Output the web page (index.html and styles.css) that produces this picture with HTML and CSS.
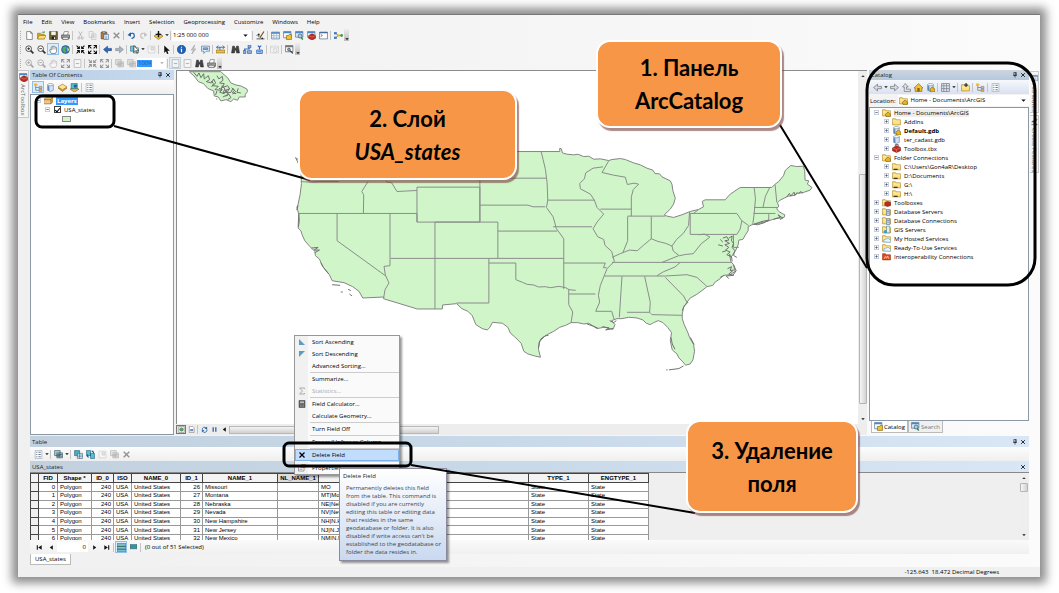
FILE: index.html
```html
<!DOCTYPE html>
<html lang="ru">
<head>
<meta charset="utf-8">
<title>ArcMap</title>
<link rel="stylesheet" href="styles.css">
</head>
<body>
<svg class="defs" aria-hidden="true">
  <symbol id="new" viewBox="0 0 16 16"><path d="M3 1h7l3 3v11H3z" fill="#fff" stroke="#444"/><path d="M10 1v3h3" fill="none" stroke="#444"/></symbol>
  <symbol id="open" viewBox="0 0 16 16"><path d="M1 14V4h5l1 2h6v8z" fill="#d9a520" stroke="#8a6a10"/><path d="M1 14l3-6h12l-3 6z" fill="#ffe27a" stroke="#8a6a10"/><path d="M8 3q3-3 5 0m0 0V0m0 3h-3" stroke="#2a8a3a" fill="none"/></symbol>
  <symbol id="save" viewBox="0 0 16 16"><path d="M1 1h14v14H1z" fill="#6b6435" stroke="#333"/><path d="M4 1h8v6H4z" fill="#f4f4e8"/><path d="M5 10h7v5H5z" fill="#222"/><path d="M9 11h2v3H9z" fill="#fff"/></symbol>
  <symbol id="print" viewBox="0 0 16 16"><path d="M4 7l2-6h7l-1 6" fill="#fff" stroke="#555"/><path d="M1 7h14v6H1z" fill="#9aa0a8" stroke="#333"/><path d="M3 11h10v4H3z" fill="#eee" stroke="#333"/><path d="M11 9h3" stroke="#e8c020"/></symbol>
  <symbol id="cut" viewBox="0 0 16 16"><path d="M5 1l5 9M11 1L6 10" stroke="#555" stroke-width="1.5"/><circle cx="5" cy="12.500" r="2" fill="none" stroke="#555" stroke-width="1.500"/><circle cx="11" cy="12.500" r="2" fill="none" stroke="#555" stroke-width="1.500"/></symbol>
  <symbol id="copy" viewBox="0 0 16 16"><path d="M2 1h7v10H2zM6 5h8v10H6z" fill="#fff" stroke="#555"/><path d="M8 8h4M8 10h4M8 12h4" stroke="#555"/></symbol>
  <symbol id="paste" viewBox="0 0 16 16"><path d="M2 2h10v12H2z" fill="#b8783a" stroke="#5a3a10"/><path d="M5 0h4v4H5z" fill="#d8d8d8" stroke="#444"/><path d="M7 6h8v9H7z" fill="#fff" stroke="#24508a"/><path d="M9 9h4M9 11h4M9 13h4" stroke="#3c6eb0"/></symbol>
  <symbol id="x" viewBox="0 0 16 16"><path d="M3 3l10 10M13 3L3 13" stroke="currentColor" stroke-width="2.500"/></symbol>
  <symbol id="undo" viewBox="0 0 16 16"><path d="M4 6q9-5 9 3q0 4-5 4" fill="none" stroke="#1e5aa8" stroke-width="2"/><path d="M1 7l6-5v8z" fill="#1e5aa8"/></symbol>
  <symbol id="redo" viewBox="0 0 16 16"><path d="M12 6q-9-5-9 3q0 4 5 4" fill="none" stroke="#777" stroke-width="2"/><path d="M15 7L9 2v8z" fill="#777"/></symbol>
  <symbol id="add" viewBox="0 0 16 16"><path d="M0 9l8-5 8 5-8 6z" fill="#f0c040" stroke="#7a5a10"/><path d="M8 0v11M3 6h10" stroke="#111" stroke-width="2.500"/></symbol>
  <symbol id="edit" viewBox="0 0 16 16"><path d="M1 8l4-2v5M1 14h14" stroke="#444" fill="none" stroke-width="1.500"/><path d="M14 1L7 12" stroke="#6b4a20" stroke-width="2"/><circle cx="5" cy="6" r="1.500" fill="#222"/><circle cx="11" cy="13" r="1.500" fill="#222"/></symbol>
  <symbol id="win" viewBox="0 0 16 16"><path d="M1 2h14v12H1z" fill="#fff" stroke="#2d5686"/><path d="M1 2h14v3H1z" fill="#4f86c6"/><path d="M5 5v9M10 5v9M1 8h14M1 11h14" stroke="#86a6cc"/></symbol>
  <symbol id="cat" viewBox="0 0 16 16"><path d="M1 1h13v11H1z" fill="#fff" stroke="#2d5686"/><path d="M1 1h13v3H1z" fill="#4f86c6"/><path d="M6 8h4l1-2h4v9H6z" fill="#f2c230" stroke="#6a5208"/></symbol>
  <symbol id="srch" viewBox="0 0 16 16"><path d="M1 1h13v10H1z" fill="#dcebf8" stroke="#2d5686"/><path d="M1 1h13v3H1z" fill="#4f86c6"/><circle cx="9" cy="9" r="3.500" fill="#9fd3f2" stroke="#333"/><path d="M11 12l3 3" stroke="#248a3e" stroke-width="2.500"/></symbol>
  <symbol id="tbx" viewBox="0 0 16 16"><path d="M1 7l7-4 7 3v6l-7 3-7-3z" fill="#c02a20" stroke="#7a1008"/><path d="M1 7l7 3 7-4M8 10v5" stroke="#f08a80" fill="none"/><path d="M6 4V1h5v3" fill="none" stroke="#555" stroke-width="1.500"/></symbol>
  <symbol id="tbxwin" viewBox="0 0 16 16"><path d="M1 1h13v10H1z" fill="#fff" stroke="#2d5686"/><path d="M1 1h13v3H1z" fill="#4f86c6"/><path d="M3 8l6-3 6 3v5l-6 3-6-3z" fill="#c02a20" stroke="#7a1008"/><path d="M3 8l6 3 6-3" stroke="#f08a80" fill="none"/></symbol>
  <symbol id="py" viewBox="0 0 16 16"><path d="M1 2h14v12H1z" fill="#fff" stroke="#2d4666"/><path d="M1 2h14v2H1z" fill="#385f92"/><path d="M3 6l3 2-3 2" stroke="#222" fill="none"/></symbol>
  <symbol id="model" viewBox="0 0 16 16"><path d="M3 4l5 4-5 4M8 8h5" stroke="#444" fill="none"/><path d="M0 2h5v4H0z" fill="#3f79c4"/><path d="M0 10h5v4H0z" fill="#3f79c4"/><path d="M5 6h5v4H5z" fill="#e8b820"/><circle cx="13.500" cy="8" r="2.500" fill="#3aa248"/></symbol>
  <symbol id="zin" viewBox="0 0 16 16"><circle cx="6.500" cy="6.500" r="5" fill="#fff" stroke="#333" stroke-width="1.500"/><path d="M10 10l5 5" stroke="#333" stroke-width="3"/><path d="M4 6.500h5M6.500 4v5" stroke="#222" stroke-width="1.500"/></symbol>
  <symbol id="zout" viewBox="0 0 16 16"><circle cx="6.500" cy="6.500" r="5" fill="#fff" stroke="#333" stroke-width="1.500"/><path d="M10 10l5 5" stroke="#333" stroke-width="3"/><path d="M4 6.500h5" stroke="#222" stroke-width="1.500"/></symbol>
  <symbol id="hand" viewBox="0 0 16 16"><path d="M4 15L1 9q0-2 3 0V4q1-2 2 0V3q1-3 2.500 0 1-2 2.500 1 2-1 2.500 1v6l-2 4z" fill="#fff" stroke="#444"/><path d="M6 4v4M8.500 3v5M11 4v4" stroke="#777"/></symbol>
  <symbol id="globe" viewBox="0 0 16 16"><circle cx="8" cy="8" r="7" fill="#2f78c8" stroke="#174070"/><path d="M3 4l5-2 2 3-3 3 2 3-2 3-4-4z" fill="#58b04a"/><path d="M11 4l4 4-3 4z" fill="#e2d860"/></symbol>
  <symbol id="dview" viewBox="0 0 16 16"><path d="M2 1h12v14H2z" fill="#fff" stroke="#555"/><circle cx="8" cy="8" r="4" fill="#58a86a" stroke="#2a6a3a"/></symbol>
  <symbol id="lview" viewBox="0 0 16 16"><path d="M3 1h8l3 3v11H3z" fill="#fff" stroke="#555"/><path d="M5 7h7v5H5z" fill="#6a90b8"/></symbol>
  <symbol id="fixin" viewBox="0 0 16 16"><path d="M2 6h4V2M14 6h-4V2M2 10h4v4M14 10h-4v4M1 1l4 4M15 1l-4 4M1 15l4-4M15 15l-4-4" fill="none" stroke="#111" stroke-width="1.800"/></symbol>
  <symbol id="fixout" viewBox="0 0 16 16"><path d="M1 6V1h5M15 6V1h-5M1 10v5h5M15 10v5h-5M1 1l5 5M15 1l-5 5M1 15l5-5M15 15l-5-5" fill="none" stroke="#111" stroke-width="1.800"/></symbol>
  <symbol id="left" viewBox="0 0 16 16"><path d="M1 8l7-6v4h7v4H8v4z" fill="#2c68c0" stroke="#16407c"/></symbol>
  <symbol id="right" viewBox="0 0 16 16"><path d="M15 8L8 2v4H1v4h7v4z" fill="#a9b3bf" stroke="#7e8894"/></symbol>
  <symbol id="gleft" viewBox="0 0 16 16"><path d="M1 8l7-6v4h7v4H8v4z" fill="#d8dbe2" stroke="#555"/></symbol>
  <symbol id="gright" viewBox="0 0 16 16"><path d="M15 8L8 2v4H1v4h7v4z" fill="#d8dbe2" stroke="#555"/></symbol>
  <symbol id="up" viewBox="0 0 16 16"><path d="M6 1l5 6H8v4h7v4H4V7H1z" fill="#e4e4e4" stroke="#555"/></symbol>
  <symbol id="sel" viewBox="0 0 16 16"><path d="M1 2h9v9H1z" fill="#6bd0d8" stroke="#24586a"/><path d="M6 5h9v9H6z" fill="#e8f4e8" stroke="#24586a"/><path d="M7 1v12l3-3 2 5 1.500-1-2-4h4z" fill="#fff" stroke="#111"/></symbol>
  <symbol id="clear" viewBox="0 0 16 16"><path d="M2 2h12v12H2z" fill="#fff" stroke="#777"/><path d="M7 4h5v5H7z" fill="#ccc" stroke="#777"/></symbol>
  <symbol id="ptr" viewBox="0 0 16 16"><path d="M4 1v13l3-3 2 5 2.500-1-2-5h4.500z" fill="#111"/></symbol>
  <symbol id="info" viewBox="0 0 16 16"><circle cx="8" cy="8" r="7.500" fill="#1f62b8" stroke="#123a78"/><path d="M8 3v2M8 7v6M6.500 7H8" stroke="#fff" stroke-width="2"/></symbol>
  <symbol id="bolt" viewBox="0 0 16 16"><path d="M10 0L4 9h4l-3 7 7-9H8z" fill="#ccc" stroke="#999"/></symbol>
  <symbol id="pop" viewBox="0 0 16 16"><path d="M1 2h14v9H9l-4 4v-4H1z" fill="#e9f3fb" stroke="#2d5686"/><path d="M4 5h8v3H4z" fill="#8fb4dc" stroke="#2d5686"/></symbol>
  <symbol id="measure" viewBox="0 0 16 16"><path d="M0 9h16v5H0z" fill="#f0c040" stroke="#7a5a10"/><path d="M1 4h14M4 1L1 4l3 3M12 1l3 3-3 3M7 4v5" fill="none" stroke="#1d5da8" stroke-width="1.500"/></symbol>
  <symbol id="find" viewBox="0 0 16 16"><path d="M3 2h3l1 4h2l1-4h3l2 12h-5l-1-5H7l-1 5H1z" fill="#444" stroke="#222"/></symbol>
  <symbol id="route" viewBox="0 0 16 16"><path d="M3 14V7h8V2" fill="none" stroke="#2c68c0" stroke-width="2"/><path d="M9 0h5v5H9zM8 10h7v5H8zM0 10h5v5H0z" fill="#8cb8e8" stroke="#1d4a86"/></symbol>
  <symbol id="xy" viewBox="0 0 16 16"><path d="M5 1l3 3 3-3M8 4v4" stroke="#2c68c0" stroke-width="2" fill="none"/><path d="M3 9h10v6H3zM5 12h6" stroke="#2c68c0" stroke-width="1.500" fill="#bcd6f2"/></symbol>
  <symbol id="time" viewBox="0 0 16 16"><path d="M1 2h14v12H1z" fill="#fff" stroke="#777"/><path d="M1 5h14" stroke="#777"/><circle cx="9" cy="10" r="3.500" fill="#eee" stroke="#777"/></symbol>
  <symbol id="viewer" viewBox="0 0 16 16"><path d="M1 1h13v11H1z" fill="#fff" stroke="#333"/><path d="M1 1h13v3H1z" fill="#777"/><circle cx="7" cy="8" r="2.500" fill="#8ac" stroke="#333"/><path d="M9 10l5 5" stroke="#333" stroke-width="2"/></symbol>
  <symbol id="page" viewBox="0 0 16 16"><path d="M2 1h12v14H2z" fill="#fff" stroke="#666" stroke-width="1.500"/><path d="M5 8h6" stroke="#666" stroke-width="2"/></symbol>
  <symbol id="list" viewBox="0 0 16 16"><path d="M2 1h12v14H2z" fill="#fff" stroke="#8a9bb0"/><path d="M4 4h2M4 8h2M4 12h2M8 4h4M8 8h4M8 12h4" stroke="#4a5f78" stroke-width="1.500"/></symbol>
  <symbol id="tree" viewBox="0 0 16 16"><path d="M3 4v9h7M3 8h7" fill="none" stroke="#555"/><path d="M0 1h6v4H0z" fill="#e9b93a"/><path d="M9 6h5v4H9zM9 11h5v4H9z" fill="#e9b93a" stroke="#77a"/></symbol>
  <symbol id="db" viewBox="0 0 16 16"><path d="M3 3v10q5 4 10 0V3" fill="#d5e4f4" stroke="#56749a"/><ellipse cx="8" cy="3" rx="5" ry="2" fill="#fff" stroke="#56749a"/><path d="M3 5v8q2 1 3 1.500V6z" fill="#5b88ba"/></symbol>
  <symbol id="dbh" viewBox="0 0 16 16"><use href="#db"/><path d="M7 11l4-4 5 4v5H8z" fill="#e9b420" stroke="#6a5208"/></symbol>
  <symbol id="diamond" viewBox="0 0 16 16"><path d="M0 9l8-4 8 4-8 6z" fill="#e5a530" stroke="#8a6010"/><path d="M0 7l8-5 8 5-8 5z" fill="#ffe59a" stroke="#8a6010"/></symbol>
  <symbol id="dsel" viewBox="0 0 16 16"><path d="M0 11l8-4 8 4-8 5z" fill="#e8b848" stroke="#8a6010"/><path d="M2 1h11v9H2z" fill="#4ec0c8" stroke="#245a78"/><path d="M7 3h5v5H7z" fill="#245a9a"/></symbol>
  <symbol id="layers" viewBox="0 0 16 16"><path d="M0 6l4-4h12l-4 4z" fill="#f6d27a" stroke="#8a6010"/><path d="M0 6h12v8H0zM12 6l4-4v8l-4 4z" fill="#e0a850" stroke="#8a6010"/><path d="M0 9h12M0 12h12" stroke="#fff"/></symbol>
  <symbol id="home" viewBox="0 0 16 16"><path d="M0 9l8-8 8 8h-2v6H2V9z" fill="#f0c030" stroke="#7a5808"/><path d="M6 9h4v6H6z" fill="#8a5a10"/></symbol>
  <symbol id="grid" viewBox="0 0 16 16"><path d="M1 1h14v14H1zM1 5h14M1 10h14M5 1v14M10 1v14" fill="none" stroke="#808890" stroke-width="1.500"/></symbol>
  <symbol id="folder" viewBox="0 0 16 16"><path d="M1 14V3h5l1 2h8v9z" fill="#ffe17c" stroke="#9a7418"/><path d="M1 7h14" stroke="#fff5c8"/></symbol>
  <symbol id="fconn" viewBox="0 0 16 16"><use href="#folder"/><path d="M3 13h7" stroke="#222" stroke-width="2"/></symbol>
  <symbol id="fhome" viewBox="0 0 16 16"><use href="#folder"/><path d="M6 11l5-4 4 4v4H7z" fill="#e9b420" stroke="#6a5208"/></symbol>
  <symbol id="fadd" viewBox="0 0 16 16"><use href="#folder"/><path d="M9 0v7M5.500 3.500h7" stroke="#222" stroke-width="2"/></symbol>
  <symbol id="ftbx" viewBox="0 0 16 16"><use href="#folder"/><path d="M5 8l5-2 5 2v5l-5 2-5-2z" fill="#c02a20" stroke="#7a1008"/></symbol>
  <symbol id="fdb" viewBox="0 0 16 16"><use href="#folder"/><path d="M8 5h6v10H8z" fill="#cfe2f5" stroke="#46688e"/><path d="M9 8h4M9 11h4" stroke="#46688e"/></symbol>
  <symbol id="fgis" viewBox="0 0 16 16"><use href="#folder"/><path d="M8 2h6v12H8z" fill="#dff0e4" stroke="#4a7a6a"/><circle cx="6" cy="12" r="3" fill="#3f9ad0"/></symbol>
  <symbol id="fweb" viewBox="0 0 16 16"><use href="#folder"/><path d="M3 14q-1-5 4-5 4-4 7 1 3 1 1 5z" fill="#e7f3fb" stroke="#5a92b8"/></symbol>
  <symbol id="fint" viewBox="0 0 16 16"><path d="M1 14V3h5l1 2h8v9z" fill="#e8442a" stroke="#8c2410"/><path d="M4 12l2-4 2 3 2-4 2 5" stroke="#ffe17c" fill="none" stroke-width="1.500"/></symbol>
  <symbol id="pin" viewBox="0 0 16 16"><path d="M5 1h6v8H5zM3 9h10M8 9v6M10 1v8" fill="none" stroke="#223" stroke-width="1.800"/></symbol>
  <symbol id="tblsel" viewBox="0 0 16 16"><path d="M1 1h9v9H1z" fill="#3fb7c4" stroke="#1b4f74"/><path d="M6 6h9v9H6z" fill="#fff" stroke="#1b4f74"/><path d="M6 9h9M6 12h9M10 6v9" stroke="#1b4f74"/></symbol>
  <symbol id="tblswap" viewBox="0 0 16 16"><path d="M1 1h7v9H1zM8 6h7v9H8z" fill="#4cc6d2" stroke="#1b4f74"/><path d="M5 13q-4-1-2-5M10 2q4 0 3 4" fill="none" stroke="#1d56a8" stroke-width="2"/></symbol>
  <symbol id="tbls" viewBox="0 0 16 16"><path d="M1 1h10v9H1zM5 5h10v9H5z" fill="#a8ccd2" stroke="#2a4a58"/><path d="M5 8h10M5 11h10M9 5v9" stroke="#2a4a58"/></symbol>
  <symbol id="rows" viewBox="0 0 16 16"><path d="M0 1h16v14H0z" fill="#7fc3c8" stroke="#366a74"/><path d="M0 6h16M0 11h16" stroke="#2b5660" stroke-width="1.500"/></symbol>
  <symbol id="srows" viewBox="0 0 16 16"><path d="M0 1h16v10H0z" fill="#35949c" stroke="#2b5660"/></symbol>
  <symbol id="asc" viewBox="0 0 16 16"><path d="M2 2v12h12z" fill="#5a9cc4"/></symbol>
  <symbol id="desc" viewBox="0 0 16 16"><path d="M2 2v12L14 2z" fill="#5a9cc4"/></symbol>
  <symbol id="sigma" viewBox="0 0 16 16"><path d="M13 4V2H3l6 6-6 6h10v-2" fill="none" stroke="#aaa" stroke-width="2"/></symbol>
  <symbol id="calc" viewBox="0 0 16 16"><path d="M2 1h12v14H2z" fill="#666" stroke="#333"/><path d="M4 3h8v3H4z" fill="#b8c4cc"/><path d="M4 8h8M4 11h8M4 13h8" stroke="#999" stroke-dasharray="2 1"/></symbol>
  <symbol id="props" viewBox="0 0 16 16"><path d="M1 3h11v11H1z" fill="#fff" stroke="#446"/><path d="M7 1h8v6H7z" fill="#e8b848" stroke="#7a5a10"/><path d="M3 8h6M3 11h6" stroke="#668"/></symbol>
  <symbol id="refresh" viewBox="0 0 16 16"><path d="M3 9a5 5 0 0 1 9-4M13 7a5 5 0 0 1-9 5" fill="none" stroke="#2c68a8" stroke-width="2"/><path d="M14 1v6H8zM2 15V9h6z" fill="#2c68a8"/></symbol>
  <symbol id="pause" viewBox="0 0 16 16"><path d="M5 3v10M11 3v10" stroke="#2c68a8" stroke-width="3"/></symbol>
  <symbol id="first" viewBox="0 0 16 16"><path d="M3 3v10" stroke="#111" stroke-width="2.500"/><path d="M13 3v10L5 8z" fill="#111"/></symbol>
  <symbol id="prev" viewBox="0 0 16 16"><path d="M11 3v10L4 8z" fill="#111"/></symbol>
  <symbol id="next" viewBox="0 0 16 16"><path d="M5 3v10l7-5z" fill="#111"/></symbol>
  <symbol id="last" viewBox="0 0 16 16"><path d="M13 3v10" stroke="#111" stroke-width="2.500"/><path d="M3 3v10l8-5z" fill="#111"/></symbol>
  <symbol id="caret" viewBox="0 0 16 16"><path d="M1 5h14l-7 7z" fill="#111"/></symbol>
  <symbol id="caretup" viewBox="0 0 16 16"><path d="M1 12h14L8 5z" fill="#333"/></symbol>
  <symbol id="plus" viewBox="0 0 16 16"><path d="M1 1h14v14H1z" fill="#fff" stroke="#98a4b6" stroke-width="2"/><path d="M4 8h8M8 4v8" stroke="#2a3a6a" stroke-width="2"/></symbol>
  <symbol id="minus" viewBox="0 0 16 16"><path d="M1 1h14v14H1z" fill="#fff" stroke="#98a4b6" stroke-width="2"/><path d="M4 8h8" stroke="#2a3a6a" stroke-width="2"/></symbol>
</svg>

<div class="app">
  <nav class="menubar">
    <button>File</button><button>Edit</button><button>View</button><button>Bookmarks</button><button>Insert</button><button>Selection</button><button>Geoprocessing</button><button>Customize</button><button>Windows</button><button>Help</button>
  </nav>

  <div class="toolbar">
    <span class="grip"></span>
    <button class="tool" aria-label="New"><svg><use href="#new"/></svg></button>
    <button class="tool" aria-label="Open"><svg><use href="#open"/></svg></button>
    <button class="tool" aria-label="Save"><svg><use href="#save"/></svg></button>
    <button class="tool" aria-label="Print"><svg><use href="#print"/></svg></button>
    <span class="sep"></span>
    <button class="tool off" aria-label="Cut"><svg><use href="#cut"/></svg></button>
    <button class="tool off" aria-label="Copy"><svg><use href="#copy"/></svg></button>
    <button class="tool" aria-label="Paste"><svg><use href="#paste"/></svg></button>
    <button class="tool off" aria-label="Delete"><svg><use href="#x"/></svg></button>
    <span class="sep"></span>
    <button class="tool" aria-label="Undo"><svg><use href="#undo"/></svg></button>
    <button class="tool off" aria-label="Redo"><svg><use href="#redo"/></svg></button>
    <span class="sep"></span>
    <button class="tool" aria-label="Add data"><svg><use href="#add"/></svg></button>
    <button class="drop" aria-label="Add data options"><svg><use href="#caret"/></svg></button>
    <span class="sep"></span>
    <span class="combo scale"><select aria-label="Map scale"><option>1:25 000 000</option></select><svg><use href="#caret"/></svg></span>
    <span class="sep"></span>
    <button class="tool" aria-label="Editor"><svg><use href="#edit"/></svg></button>
    <span class="sep"></span>
    <button class="tool" aria-label="Table of contents"><svg><use href="#win"/></svg></button>
    <button class="tool" aria-label="Catalog"><svg><use href="#cat"/></svg></button>
    <button class="tool" aria-label="Search"><svg><use href="#srch"/></svg></button>
    <button class="tool" aria-label="ArcToolbox"><svg><use href="#tbxwin"/></svg></button>
    <button class="tool" aria-label="Python"><svg><use href="#py"/></svg></button>
    <span class="sep"></span>
    <button class="tool" aria-label="ModelBuilder"><svg><use href="#model"/></svg></button>
    <button class="more" aria-label="More"><svg><use href="#caret"/></svg></button>
  </div>

  <div class="toolbar">
    <span class="grip"></span>
    <button class="tool" aria-label="Zoom in"><svg><use href="#zin"/></svg></button>
    <button class="tool" aria-label="Zoom out"><svg><use href="#zout"/></svg></button>
    <button class="tool on" aria-label="Pan"><svg><use href="#hand"/></svg></button>
    <button class="tool" aria-label="Full extent"><svg><use href="#globe"/></svg></button>
    <span class="sep"></span>
    <button class="tool" aria-label="Fixed zoom in"><svg><use href="#fixin"/></svg></button>
    <button class="tool" aria-label="Fixed zoom out"><svg><use href="#fixout"/></svg></button>
    <span class="sep"></span>
    <button class="tool" aria-label="Back"><svg><use href="#left"/></svg></button>
    <button class="tool" aria-label="Forward"><svg><use href="#right"/></svg></button>
    <span class="sep"></span>
    <button class="tool" aria-label="Select features"><svg><use href="#sel"/></svg></button>
    <button class="drop" aria-label="Select options"><svg><use href="#caret"/></svg></button>
    <button class="tool off" aria-label="Clear selection"><svg><use href="#clear"/></svg></button>
    <span class="sep"></span>
    <button class="tool" aria-label="Select elements"><svg><use href="#ptr"/></svg></button>
    <span class="sep"></span>
    <button class="tool" aria-label="Identify"><svg><use href="#info"/></svg></button>
    <button class="tool" aria-label="Hyperlink"><svg><use href="#bolt"/></svg></button>
    <button class="tool" aria-label="HTML popup"><svg><use href="#pop"/></svg></button>
    <span class="sep"></span>
    <button class="tool" aria-label="Measure"><svg><use href="#measure"/></svg></button>
    <span class="sep"></span>
    <button class="tool" aria-label="Find"><svg><use href="#find"/></svg></button>
    <button class="tool" aria-label="Find route"><svg><use href="#route"/></svg></button>
    <button class="tool" aria-label="Go to XY"><svg><use href="#xy"/></svg></button>
    <span class="sep"></span>
    <button class="tool off" aria-label="Time slider"><svg><use href="#time"/></svg></button>
    <span class="sep"></span>
    <button class="tool" aria-label="Viewer window"><svg><use href="#viewer"/></svg></button>
    <button class="more" aria-label="More"><svg><use href="#caret"/></svg></button>
  </div>

  <div class="toolbar">
    <span class="grip"></span>
    <button class="tool off" aria-label="Layout zoom in"><svg><use href="#zin"/></svg></button>
    <button class="tool off" aria-label="Layout zoom out"><svg><use href="#zout"/></svg></button>
    <button class="tool off" aria-label="Layout pan"><svg><use href="#hand"/></svg></button>
    <button class="tool off" aria-label="Whole page"><svg><use href="#fixout"/></svg></button>
    <button class="tool off" aria-label="Actual size"><svg><use href="#page"/></svg></button>
    <span class="sep"></span>
    <button class="tool off" aria-label="Layout fixed zoom in"><svg><use href="#fixin"/></svg></button>
    <button class="tool off" aria-label="Layout fixed zoom out"><svg><use href="#fixout"/></svg></button>
    <span class="sep"></span>
    <button class="tool off" aria-label="Previous page extent"><svg><use href="#tbls"/></svg></button>
    <button class="tool off" aria-label="Next page extent"><svg><use href="#tbls"/></svg></button>
    <span class="combo percent"><select aria-label="Page zoom"><option>100%</option></select><svg><use href="#caret"/></svg></span>
    <span class="sep"></span>
    <button class="tool off pressed" aria-label="Draft mode"><svg><use href="#page"/></svg></button>
    <button class="tool off" aria-label="Focus frame"><svg><use href="#page"/></svg></button>
    <button class="tool" aria-label="Change layout"><svg><use href="#find"/></svg></button>
    <button class="tool" aria-label="Data driven pages"><svg><use href="#print"/></svg></button>
    <button class="more" aria-label="More"><svg><use href="#caret"/></svg></button>
  </div>

  <main class="work">
    <aside class="strip"><button class="sidetab"><svg><use href="#tbxwin"/></svg><span>ArcToolbox</span></button></aside>

    <section class="panel toc">
      <header class="title"><span>Table Of Contents</span><button aria-label="Pin"><svg><use href="#pin"/></svg></button><button aria-label="Close"><svg><use href="#x"/></svg></button></header>
      <div class="paneltools">
        <button class="tool on" aria-label="List by drawing order"><svg><use href="#tree"/></svg></button>
        <button class="tool" aria-label="List by source"><svg><use href="#db"/></svg></button>
        <button class="tool" aria-label="List by visibility"><svg><use href="#diamond"/></svg></button>
        <button class="tool" aria-label="List by selection"><svg><use href="#dsel"/></svg></button>
        <span class="sep"></span>
        <button class="tool" aria-label="Options"><svg><use href="#list"/></svg></button>
      </div>
      <div class="sheet toctree">
        <div class="row"><svg class="exp"><use href="#minus"/></svg><svg><use href="#layers"/></svg><b class="picked">Layers</b></div>
        <div class="row lv1"><svg class="exp"><use href="#minus"/></svg><label><input type="checkbox" checked>USA_states</label></div>
        <div class="row lv2"><span class="swatch"></span></div>
      </div>
    </section>

    <section class="mapview">
      <div class="mapbody">
        <svg class="map" viewBox="-342 -210 2046 1062" preserveAspectRatio="xMinYMin meet" role="img" aria-label="USA_states">
          <g fill="#cff5c9" stroke="#858585" stroke-width="3" stroke-linejoin="round">
            <path d="M-305-208L-210-208-200-198-190-190-180-174-165-168-150-165-132-156-130-148-137-140-137-132-155-132-160-122-172-126-180-118-195-124-210-120-218-132-230-135-232-150-250-158-262-172-278-178-288-192z"/>
            <path d="M14 50L22 56 26 48 40 32H808V22L813 24 816 36 830 40 850 42 862 40 880 47 895 46 910 55 930 54 955 59 965 56 990 53 1005 56 1030 66 1050 72 1070 82 1088 88 1094 98 1108 99 1115 108 1140 120 1145 130 1148 150 1155 172 1150 190 1140 205 1122 222 1130 226 1150 230 1175 222 1200 212 1225 206 1240 198 1236 182 1245 177H1305L1320 160 1350 140H1445L1455 130 1466 122 1480 105 1486 88 1502 74 1520 77 1540 76 1544 90 1545 118 1556 120 1552 130 1566 140 1560 148 1540 155 1522 158 1512 164 1495 166 1482 172 1470 178 1462 186 1466 196 1460 204 1466 212 1476 218 1484 222 1482 230 1474 232 1460 232 1448 236 1430 242 1405 248 1385 252 1374 258 1374 270 1366 282 1358 296 1346 298 1344 312 1336 330 1322 350 1318 340 1322 362 1330 372 1335 392 1320 402 1300 404 1290 414 1275 424 1268 434 1250 438 1235 450 1218 462 1200 472 1190 485 1180 500 1176 520 1176 534 1182 552 1192 574 1198 590 1210 612 1213 632 1208 658 1200 670 1186 674 1178 664 1166 652 1160 640 1146 628 1142 610 1140 600 1144 576 1132 560 1118 546 1104 540 1090 546 1080 552 1068 548 1058 538 1040 532 1015 530 995 534 980 534 964 540 974 552 968 566 952 562 940 560 920 564 905 554 895 548 880 550 862 546 842 546 826 554 808 560 790 572 770 582 756 592 746 606 744 626 750 650 732 646 712 640 700 632 692 608 672 588 660 578 652 560 636 548 606 545 598 560 590 568 575 564 556 552 545 525 532 512 514 504 498 489 456 493 455 505H380L278 474 280 469 216 472 205 452 186 438 160 426 124 420 116 402 96 378 86 355 74 345 72 332 56 316 42 300 34 282 30 270 22 262 26 240 24 220 18 200 22 190 28 160 32 128 30 90 22 66z"/>
          </g>
          <g fill="none" stroke="#8c8c8c" stroke-width="3">
            <path d="M30 122l24 2 30-2h60M24 218H379M232 122l-19 30 6 10-1 56M139 218v82l145 105M298 218v157l-18 2 4 26 11 24-12 20-4 24M285 122l18 4 16 26 60-3M379 139H568V244H379zM568 118v126M379 218v26M433 244v261M433 244H622V353M300 353H820M595 353V487H498M595 367H676v50l20 8 14 6 20 2 14 6 20-1 16 3 26-4 20 4 10 6 20 2M568 112H768M568 193H712l16 5h36M752 32l6 24 7 30 5 40 2 52-4 22 20 28 10 36 22 30V445M622 271H800M772 178H912M788 258H905M820 367H945l-6 14 10 0M835 445v15H915M835 460l0 32 12 22-5 32"/>
            <path d="M938 78l-30 4-22 14-4 18-14 14 2 16 30 16 12 18 8 22 20 20-20 24-12 20 14 24 18 8 4 18 20 18 8 30-22 22-20 50-6 30 4 20-12 28h48l8 26M955 60l-20 35 35 8 35 6 6 22 20-4 14 3-16 16-6 22 0 58M930 205H1023M1012 226H1125M1012 227V300l-14 35M1083 227v68M965 350l22-10 30-12 24 2 18-16 24-20 20 8 24 6 18 8 14-20 20-18 16-24 3-40M1200 218H1340l15 22-5 25-10 16H1200zM1225 206l-15 12M1145 315l4 16 18 14 20-4 22-2 24-30 26-20-16-9-18 2M965 365H1325M1165 345l-50 20M1170 365l-16 14-34 14-20 12M942 406H1125l65-4 30 8 30 27M1125 410l55 56 10 19M995 407l-8 123M1063 407l17 78-2 30M1010 515h68l7 7 90 2M1392 140l4 34-4 46-4 30M1440 138l-14 28-8 36M1455 132l5 52M1392 200h70M1390 218h66M1436 220v18M1355 240l20 14M1330 282v38h16"/>
          </g>
          <g fill="none" stroke="#707070" stroke-width="3">
            <path d="M1298 292l12-4 6 10-12 2 14 8-14 4 12 8-10 8 14 6-10 8 14 6 2 14M1316 292l10-6-2 14 6 8-4 12 8 10-4 14 10 6M1290 296l8 8M1284 312l14 4M1296 334l12-4M1312 384l12-6-4 12 10-2-14 12 14 4-22 2 8 8M1302 404l-12 6M1330 372l8 18-10 14M1392 250l24-8 20-4-14 8-20 6zM1450 236l20-6-6-8 14 10-8 4M1490 168l8-10 4 8 10-12 2 10 8-10M1525 158l8-6 4 6M936 558l20 4-10 6 22-4M958 540l12 6 8-6M744 622l4-22 12-10M750 596l14-10 10-2M62 322l20-2-12 8 16 0-14 8M124 432l24 2M150 454h6M172 446l8 4M176 460l8 6M1142 590l4 20 8 16M1136 688l30-4 14-8M1132 688h-4M1176 510l6-14 12-12M890 550l16 6 16 6M18 208l4-14M24 218l-2 40M90 366l8 14 16 20M1200 590l12 22"/>
            <path d="M-292-206l10 12 6-10 6 14 8-12 2 16 12-10 4 12-10 6 16 4 6-12 6 12-8 8 16 2-10 10 18 2 4-14 8 10-6 12 14-4 6-10M-222-196l6 10 10-8 2 12-10 8 14 2-6 12 16-6 6 10-14 4 6 8 12-2 6-12 8 10-8 8M-216-158l10 4-8 8 14 4 6-10 6 12-16 8M-196-134l10-6 6 10-10 6M-240-180l8 8-6 10M-178-160l8 8-6 8 12 2M-158-158l-4 12 12 2M-222-150l-4 12M-224-126h3"/>
          </g>
        </svg>
        <div class="vscroll"><svg><use href="#caretup"/></svg><span class="thumb"></span><svg><use href="#caret"/></svg></div>
      </div>
      <div class="mapbar">
        <button class="tool boxed" aria-label="Data view"><svg><use href="#dview"/></svg></button>
        <button class="tool" aria-label="Layout view"><svg><use href="#lview"/></svg></button>
        <span class="sep"></span>
        <button class="tool" aria-label="Refresh"><svg><use href="#refresh"/></svg></button>
        <button class="tool" aria-label="Pause"><svg><use href="#pause"/></svg></button>
        <button class="tool" aria-label="Scroll left"><svg><use href="#prev"/></svg></button>
        <span class="hthumb"></span>
      </div>
    </section>

    <section class="panel catalog">
      <header class="title"><span>Catalog</span><button aria-label="Pin"><svg><use href="#pin"/></svg></button><button aria-label="Close"><svg><use href="#x"/></svg></button></header>
      <div class="paneltools blue">
        <button class="tool" aria-label="Back"><svg><use href="#gleft"/></svg></button>
        <button class="drop" aria-label="Back options"><svg><use href="#caret"/></svg></button>
        <button class="tool" aria-label="Forward"><svg><use href="#gright"/></svg></button>
        <button class="tool" aria-label="Up one level"><svg><use href="#up"/></svg></button>
        <button class="tool" aria-label="Home folder"><svg><use href="#home"/></svg></button>
        <button class="tool" aria-label="Default geodatabase"><svg><use href="#dbh"/></svg></button>
        <span class="sep"></span>
        <button class="tool" aria-label="Contents view"><svg><use href="#grid"/></svg></button>
        <button class="drop" aria-label="View options"><svg><use href="#caret"/></svg></button>
        <span class="sep"></span>
        <button class="tool" aria-label="Connect to folder"><svg><use href="#fadd"/></svg></button>
        <span class="sep"></span>
        <button class="tool" aria-label="Toggle tree"><svg><use href="#tree"/></svg></button>
        <span class="sep"></span>
        <button class="tool" aria-label="Options"><svg><use href="#list"/></svg></button>
      </div>
      <div class="location"><label for="loc">Location:</label><span class="combo place"><svg class="pic"><use href="#fhome"/></svg><select id="loc"><option>Home - Documents\ArcGIS</option></select><svg><use href="#caret"/></svg></span></div>
      <div class="sheet cattree">
        <div class="row"><svg class="exp"><use href="#minus"/></svg><svg><use href="#fhome"/></svg><span class="soft">Home - Documents\ArcGIS</span></div>
        <div class="row lv1"><svg class="exp"><use href="#plus"/></svg><svg><use href="#folder"/></svg><span>AddIns</span></div>
        <div class="row lv1"><svg class="exp"><use href="#plus"/></svg><svg><use href="#dbh"/></svg><b>Default.gdb</b></div>
        <div class="row lv1"><svg class="exp"><use href="#plus"/></svg><svg><use href="#db"/></svg><span>ter_cadast.gdb</span></div>
        <div class="row lv1"><svg class="exp"><use href="#plus"/></svg><svg><use href="#tbx"/></svg><span>Toolbox.tbx</span></div>
        <div class="row"><svg class="exp"><use href="#minus"/></svg><svg><use href="#fhome"/></svg><span>Folder Connections</span></div>
        <div class="row lv1"><svg class="exp"><use href="#plus"/></svg><svg><use href="#fconn"/></svg><span>C:\Users\Gon4aR\Desktop</span></div>
        <div class="row lv1"><svg class="exp"><use href="#plus"/></svg><svg><use href="#fconn"/></svg><span>D:\Documents</span></div>
        <div class="row lv1"><svg class="exp"><use href="#plus"/></svg><svg><use href="#fconn"/></svg><span>G:\</span></div>
        <div class="row lv1"><svg class="exp"><use href="#plus"/></svg><svg><use href="#fconn"/></svg><span>H:\</span></div>
        <div class="row"><svg class="exp"><use href="#plus"/></svg><svg><use href="#ftbx"/></svg><span>Toolboxes</span></div>
        <div class="row"><svg class="exp"><use href="#plus"/></svg><svg><use href="#fdb"/></svg><span>Database Servers</span></div>
        <div class="row"><svg class="exp"><use href="#plus"/></svg><svg><use href="#fdb"/></svg><span>Database Connections</span></div>
        <div class="row"><svg class="exp"><use href="#plus"/></svg><svg><use href="#fgis"/></svg><span>GIS Servers</span></div>
        <div class="row"><svg class="exp"><use href="#plus"/></svg><svg><use href="#fweb"/></svg><span>My Hosted Services</span></div>
        <div class="row"><svg class="exp"><use href="#plus"/></svg><svg><use href="#fweb"/></svg><span>Ready-To-Use Services</span></div>
        <div class="row"><svg class="exp"><use href="#plus"/></svg><svg><use href="#fint"/></svg><span>Interoperability Connections</span></div>
      </div>
      <div class="tabs"><button class="tab current"><svg><use href="#cat"/></svg>Catalog</button><button class="tab"><svg><use href="#srch"/></svg>Search</button></div>
    </section>

    <aside class="strip rightstrip"><button class="sidetab lit"><svg><use href="#win"/></svg><span>Attributes</span></button><button class="sidetab"><svg><use href="#edit"/></svg><span>Create Features</span></button></aside>
  </main>

  <section class="tablewin">
    <header class="title wide"><span>Table</span><button aria-label="Pin"><svg><use href="#pin"/></svg></button><button aria-label="Close"><svg><use href="#x"/></svg></button></header>
    <div class="paneltools">
      <button class="tool" aria-label="Table options"><svg><use href="#list"/></svg></button>
      <button class="drop" aria-label="Options menu"><svg><use href="#caret"/></svg></button>
      <span class="sep"></span>
      <button class="tool" aria-label="Related tables"><svg><use href="#tbls"/></svg></button>
      <button class="drop" aria-label="Related tables menu"><svg><use href="#caret"/></svg></button>
      <span class="sep"></span>
      <button class="tool" aria-label="Select by attributes"><svg><use href="#tblsel"/></svg></button>
      <button class="tool" aria-label="Switch selection"><svg><use href="#tblswap"/></svg></button>
      <button class="tool off" aria-label="Clear selection"><svg><use href="#clear"/></svg></button>
      <button class="tool off" aria-label="Zoom to selected"><svg><use href="#tbls"/></svg></button>
      <button class="tool off" aria-label="Delete selected"><svg><use href="#x"/></svg></button>
    </div>
    <header class="title wide"><span>USA_states</span><button aria-label="Close table"><svg><use href="#x"/></svg></button></header>
    <div class="gridwrap">
      <table class="grid">
        <colgroup><col class="w8"><col class="w19"><col class="w34"><col class="w22"><col class="w18"><col class="w49"><col class="w22"><col class="w75"><col class="w41"><col class="w210"><col class="w60"><col class="w60"></colgroup>
        <thead><tr><th></th><th>FID</th><th>Shape *</th><th>ID_0</th><th>ISO</th><th>NAME_0</th><th>ID_1</th><th>NAME_1</th><th class="act">NL_NAME_1</th><th></th><th>TYPE_1</th><th>ENGTYPE_1</th></tr></thead>
        <tbody>
          <tr><td></td><td class="n">0</td><td>Polygon</td><td class="n">240</td><td>USA</td><td>United States</td><td class="n">26</td><td>Missouri</td><td></td><td>MO</td><td>State</td><td>State</td></tr>
          <tr><td></td><td class="n">1</td><td>Polygon</td><td class="n">240</td><td>USA</td><td>United States</td><td class="n">27</td><td>Montana</td><td></td><td>MT|Mont.</td><td>State</td><td>State</td></tr>
          <tr><td></td><td class="n">2</td><td>Polygon</td><td class="n">240</td><td>USA</td><td>United States</td><td class="n">28</td><td>Nebraska</td><td></td><td>NE|Nebr.</td><td>State</td><td>State</td></tr>
          <tr><td></td><td class="n">3</td><td>Polygon</td><td class="n">240</td><td>USA</td><td>United States</td><td class="n">29</td><td>Nevada</td><td></td><td>NV|Nev.</td><td>State</td><td>State</td></tr>
          <tr><td></td><td class="n">4</td><td>Polygon</td><td class="n">240</td><td>USA</td><td>United States</td><td class="n">30</td><td>New Hampshire</td><td></td><td>NH|N.H.</td><td>State</td><td>State</td></tr>
          <tr><td></td><td class="n">5</td><td>Polygon</td><td class="n">240</td><td>USA</td><td>United States</td><td class="n">31</td><td>New Jersey</td><td></td><td>NJ|N.J.</td><td>State</td><td>State</td></tr>
          <tr><td></td><td class="n">6</td><td>Polygon</td><td class="n">240</td><td>USA</td><td>United States</td><td class="n">32</td><td>New Mexico</td><td></td><td>NM|N.M.</td><td>State</td><td>State</td></tr>
        </tbody>
      </table>
      <div class="vscroll slim"><svg><use href="#caretup"/></svg><span class="thumb"></span><svg><use href="#caret"/></svg></div>
    </div>
    <div class="recnav">
      <button class="tool" aria-label="First record"><svg><use href="#first"/></svg></button>
      <button class="tool" aria-label="Previous record"><svg><use href="#prev"/></svg></button>
      <input type="text" value="0" aria-label="Record number">
      <button class="tool" aria-label="Next record"><svg><use href="#next"/></svg></button>
      <button class="tool" aria-label="Last record"><svg><use href="#last"/></svg></button>
      <span class="sep"></span>
      <button class="tool on" aria-label="Show all records"><svg><use href="#rows"/></svg></button>
      <button class="tool" aria-label="Show selected records"><svg><use href="#srows"/></svg></button>
      <span class="sep"></span>
      <span>(0 out of 51 Selected)</span>
    </div>
    <div class="sheettabs"><button>USA_states</button></div>
  </section>

  <footer class="status">-125.643&nbsp; 18.472 Decimal Degrees</footer>
</div>

<div class="menu" role="menu">
  <button><svg><use href="#asc"/></svg><span>Sort Ascending</span></button>
  <button><svg><use href="#desc"/></svg><span>Sort Descending</span></button>
  <button><span>Advanced Sorting...</span></button>
  <hr>
  <button><span>Summarize...</span></button>
  <button disabled><svg><use href="#sigma"/></svg><span>Statistics...</span></button>
  <hr>
  <button><svg><use href="#calc"/></svg><span>Field Calculator...</span></button>
  <button><span>Calculate Geometry...</span></button>
  <hr>
  <button><span>Turn Field Off</span></button>
  <hr>
  <button><span>Freeze/Unfreeze Column</span></button>
  <hr>
  <button class="hot"><svg><use href="#x"/></svg><span>Delete Field</span></button>
  <hr>
  <button><svg><use href="#props"/></svg><span>Properties...</span></button>
</div>

<div class="tip" role="tooltip">
  <strong>Delete Field</strong>
  <p>Permanently deletes this field from the table. This command is disabled if you are currently editing this table or editing data that resides in the same geodatabase or folder. It is also disabled if write access can't be established to the geodatabase or folder the data resides in.</p>
</div>

<svg class="marks" viewBox="0 0 1059 593" aria-hidden="true">
  <g fill="none" stroke="#000">
    <rect x="36" y="96" width="78" height="31" rx="6" stroke-width="3"/>
    <rect x="284" y="443" width="127" height="23" rx="5" stroke-width="3"/>
    <rect x="867" y="63" width="168" height="222" rx="27" stroke-width="3"/>
    <path d="M114 126L310 180M780 125l87 143M411 465l284 48" stroke-width="2"/>
  </g>
</svg>
<div class="callout one"><p>1. Панель<br>ArcCatalog</p></div>
<div class="callout two"><p>2. Слой<br><em>USA_states</em></p></div>
<div class="callout three"><p>3. Удаление<br>поля</p></div>
</body>
</html>
```

FILE: styles.css
```css
* { box-sizing: border-box; }

body {
  position: relative;
  margin: 0;
  padding: 14px 19px 16px 18px;
  background: #fff;
  color: #000;
  font: 6px/8px "Open Sans", "Noto Sans", sans-serif;
}

.defs { position: absolute; width: 0; height: 0; }

button, select, input { font: inherit; color: inherit; }

button {
  display: flex;
  align-items: center;
  margin: 0;
  padding: 0;
  border: 0;
  background: none;
  white-space: nowrap;
}

svg { flex: none; }

.app {
  display: flex;
  flex-direction: column;
  min-height: calc(100vh - 30px);
  background: linear-gradient(to right, #f0f0f0, #f4f4f4 40%, #fbfbfb);
  box-shadow: 0 0 9px 6px #8c8c8c;
}

.menubar {
  display: flex;
  align-items: center;
  gap: 9px;
  height: 14px;
  padding-left: 5px;
  border-top: 1px solid #777;
}

.toolbar { display: flex; align-items: center; height: 14px; }

.grip {
  width: 1px;
  height: 9px;
  margin: 0 2px;
  border-left: 1px dotted #aaa;
}

.tool { justify-content: center; width: 12px; height: 12px; }
.tool svg { width: 9px; height: 9px; }
.tool.off svg { opacity: .4; filter: grayscale(1); }
.tool.on { background: #dcedfb; outline: 1px solid #8fbfe8; outline-offset: -1px; }
.tool.pressed { background: #e8eef4; outline: 1px solid #c4d0dc; outline-offset: -1px; }
.tool.boxed { outline: 1px solid #777; outline-offset: -1px; background: #e4e4e4; }

.drop { justify-content: center; width: 5px; height: 12px; }
.drop svg { width: 4px; height: 4px; }

.sep { flex: none; width: 1px; height: 9px; margin: 0 1px; background: #c4c4c4; }

.more {
  align-items: flex-end;
  justify-content: center;
  width: 5px;
  height: 12px;
  background: linear-gradient(#eee, #bbb);
}
.more svg { width: 4px; height: 4px; }

.combo { display: flex; align-items: center; height: 11px; padding-right: 3px; background: #fff; }
.combo select {
  flex: 1;
  min-width: 0;
  height: 10px;
  padding: 0 1px;
  border: 0;
  background: none;
  appearance: none;
  line-height: 9px;
}
.combo svg { width: 5px; height: 5px; }
.scale { width: 79px; }
.percent { width: 29px; padding-right: 2px; color: #1a5aa8; }
.percent select { flex: none; width: 15px; height: 7px; line-height: 7px; margin-right: auto; background: #3399ff; }
.percent svg { opacity: .4; width: 4px; height: 4px; }

.work { display: flex; flex: 1; }

.strip { display: flex; flex-direction: column; gap: 1px; width: 12px; }
.sidetab {
  flex-direction: column;
  gap: 2px;
  width: 11px;
  height: 48px;
  padding-top: 2px;
  border: 1px solid #c8c8c8;
  border-left: 0;
  background: #f6f6f6;
  color: #666;
}
.sidetab svg { width: 9px; height: 9px; }
.sidetab span { writing-mode: vertical-rl; line-height: 8px; }
.rightstrip { width: 11px; padding: 1px 0 0 1px; gap: 2px; }
.rightstrip .sidetab { width: 9px; height: 58px; }
.rightstrip .sidetab svg { width: 7px; height: 8px; }
.rightstrip .lit { height: 42px; }

.panel { display: flex; flex-direction: column; }
.toc { width: 144px; }
.catalog { width: 160px; }

.title {
  display: flex;
  align-items: center;
  height: 11px;
  padding: 0 2px;
  background: linear-gradient(to right, #bacfe4, #c6dbef);
  color: #222;
}
.title span { flex: 1; }
.title button { justify-content: center; width: 8px; height: 10px; }
.title svg { width: 6px; height: 6px; }
.panel .title { height: 10px; }
.catalog .title { background: linear-gradient(#ccd5de, #b4c9dd); }
.wide { background: linear-gradient(to right, #c3d1df, #c8d9e9 50%, #d9e6f5); }

.paneltools {
  display: flex;
  align-items: center;
  height: 14px;
  padding-left: 2px;
  background: linear-gradient(#fcfcfc, #efefef);
}
.blue { background: linear-gradient(#f6f8fc, #d9e0f0); }

.sheet { flex: 1; border: 1px solid #8d98a5; background: #fff; }
.row { display: flex; align-items: center; gap: 3px; height: 9px; white-space: nowrap; }
.row svg { width: 9px; height: 9px; }
.row .exp { width: 5px; height: 5px; }
.row b { font-weight: 700; }

.toctree { padding: 1px 0 0 5px; }
.toctree .lv1 { padding-left: 9px; }
.toctree .lv2 { padding-left: 26px; }
.picked { padding: 0 1px; background: #3399ff; color: #fff; line-height: 8px; }
.toctree label { display: flex; align-items: center; gap: 3px; margin-left: 1px; }
.toctree input {
  display: grid;
  place-items: center;
  width: 7px;
  height: 7px;
  margin: 0;
  border: 1px solid #444;
  appearance: none;
  background: #fff;
}
.toctree input:checked::after {
  content: "";
  width: 2px;
  height: 4px;
  border: solid #000;
  border-width: 0 1px 1px 0;
  rotate: 40deg;
}
.swatch { width: 9px; height: 6px; border: 1px solid #888; background: #cff5c9; }

.mapview { display: flex; flex: 1; flex-direction: column; margin: 0 2px; min-width: 0; }
.mapbody { display: flex; flex: 1; border: 1px solid #8c8c8c; border-width: 1px 0 0 1px; background: #fff; }
.map { display: block; flex: 1; min-width: 0; height: 100%; }

.vscroll {
  display: flex;
  flex: none;
  flex-direction: column;
  align-items: center;
  width: 9px;
  padding: 3px 0;
  background: #eee;
}
.vscroll svg { width: 4px; height: 4px; }
.vscroll .thumb {
  width: 8px;
  height: 230px;
  margin: 96px 0 auto;
  border: 1px solid #b4b4b4;
  border-radius: 1px;
  background: linear-gradient(to right, #f6f6f6, #d2d2d2);
}

.mapbar { display: flex; align-items: center; height: 11px; background: #ededed; }
.mapbar .tool { width: 10px; height: 9px; }
.mapbar .tool svg { width: 7px; height: 7px; }
.hthumb {
  width: 210px;
  height: 8px;
  border: 1px solid #b8b8b8;
  background: linear-gradient(#f4f4f4, #d0d0d0);
}

.location { display: flex; align-items: center; gap: 3px; height: 13px; background: #f3f3f3; }
.location label { padding-left: 1px; }
.place { flex: 1; }
.place .pic { width: 9px; height: 9px; margin: 0 1px; }

.cattree { padding: 0 0 0 4px; }
.cattree .lv1 { padding-left: 10px; }
.soft { background: #eee; }

.tabs { display: flex; height: 14px; padding: 0 2px 2px; }
.tab { gap: 1px; padding: 0 2px; border: 1px solid #bbb; border-top: 0; color: #777; background: #f0f0f0; }
.tab svg { width: 9px; height: 9px; }
.current { background: #fff; color: #000; }

.tablewin { margin: 1px 11px 0 12px; }

.gridwrap { display: flex; justify-content: space-between; height: 68px; overflow: hidden; border-top: 1px solid #888; background: #efefef; }
.grid {
  flex: none;
  width: 618px;
  height: 70px;
  border-collapse: collapse;
  table-layout: fixed;
  background: #fff;
  font: 6px/7px "Liberation Sans", Arial, sans-serif;
}
.grid th, .grid td { padding: 0 2px; border: 1px solid #999; overflow: hidden; white-space: nowrap; text-align: left; }
.grid th { padding: 0; height: 9px; background: #f3f3f3; border-color: #444; text-align: center; }
.grid th.act { background: #ddd; }
.grid td:first-child { background: #f0f0f0; border-color: #444; }
.grid .n { text-align: right; }
.w8 { width: 8px; } .w18 { width: 18px; } .w19 { width: 19px; } .w22 { width: 22px; }
.w34 { width: 34px; } .w41 { width: 41px; } .w49 { width: 49px; } .w60 { width: 60px; }
.w75 { width: 75px; } .w210 { width: 210px; }
.slim { width: 10px; }
.slim .thumb { height: 9px; margin: 3px 0 auto; }

.recnav { display: flex; align-items: center; height: 14px; padding-left: 3px; background: linear-gradient(#fafafa, #f0f0f0); }
.recnav .tool svg { width: 7px; height: 7px; }
.recnav .tool.on svg { width: 9px; height: 9px; }
.recnav input { width: 31px; height: 10px; padding: 0 2px; border: 0; background: #fff; text-align: right; }
.recnav span:last-child { margin-left: 3px; white-space: nowrap; }

.sheettabs { height: 13px; }
.sheettabs button { height: 11px; padding: 0 4px; border: 1px solid #bbb; border-top: 0; background: #fff; }

.status { display: flex; align-items: center; justify-content: flex-end; height: 10px; padding-right: 41px; background: #f0f0f0; }

.menu {
  position: absolute;
  left: 294px;
  top: 335px;
  width: 106px;
  border: 1px solid #989898;
  background: linear-gradient(to right, #f1f1f1 13px, #fafafa 13px);
  box-shadow: 2px 2px 2px #0006;
}
.menu button { display: grid; grid-template-columns: 14px 1fr; width: 100%; height: 12px; padding-left: 3px; text-align: left; }
.menu span { grid-column: 2; }
.menu svg { width: 8px; height: 8px; }
.menu hr { height: 1px; margin: 0 0 0 15px; border: 0; background: #ccc; }
.menu button:disabled { color: #aaa; }
.menu .hot { background: #c2dcfb; outline: 1px solid #7fb2ec; outline-offset: -1px; }

.tip {
  position: absolute;
  left: 339px;
  top: 468px;
  width: 108px;
  padding: 3px 3px 4px;
  border: 1px solid #8a8a9a;
  background: linear-gradient(#fff, #c9d9f0);
  box-shadow: 2px 2px 2px #0006;
  color: #444;
}
.tip strong { font-weight: 400; color: #222; }
.tip p { margin: 4px 0 0; padding-left: 3px; }

.marks { position: absolute; left: 0; top: 0; width: 1059px; height: 593px; pointer-events: none; }

.callout {
  position: absolute;
  display: flex;
  align-items: center;
  justify-content: center;
  border: 2px solid #fff;
  border-radius: 14px;
  background: #f79646;
  box-shadow: 2px 3px 1px #7a4540a0;
  color: #000;
  font: bold 22px/33px Lato, "Open Sans", sans-serif;
  text-align: center;
}
.callout p { margin: 0; }
.one { left: 596px; top: 40px; width: 186px; height: 88px; }
.two { left: 298px; top: 89px; width: 219px; height: 91px; }
.three { left: 686px; top: 420px; width: 172px; height: 93px; }
```
